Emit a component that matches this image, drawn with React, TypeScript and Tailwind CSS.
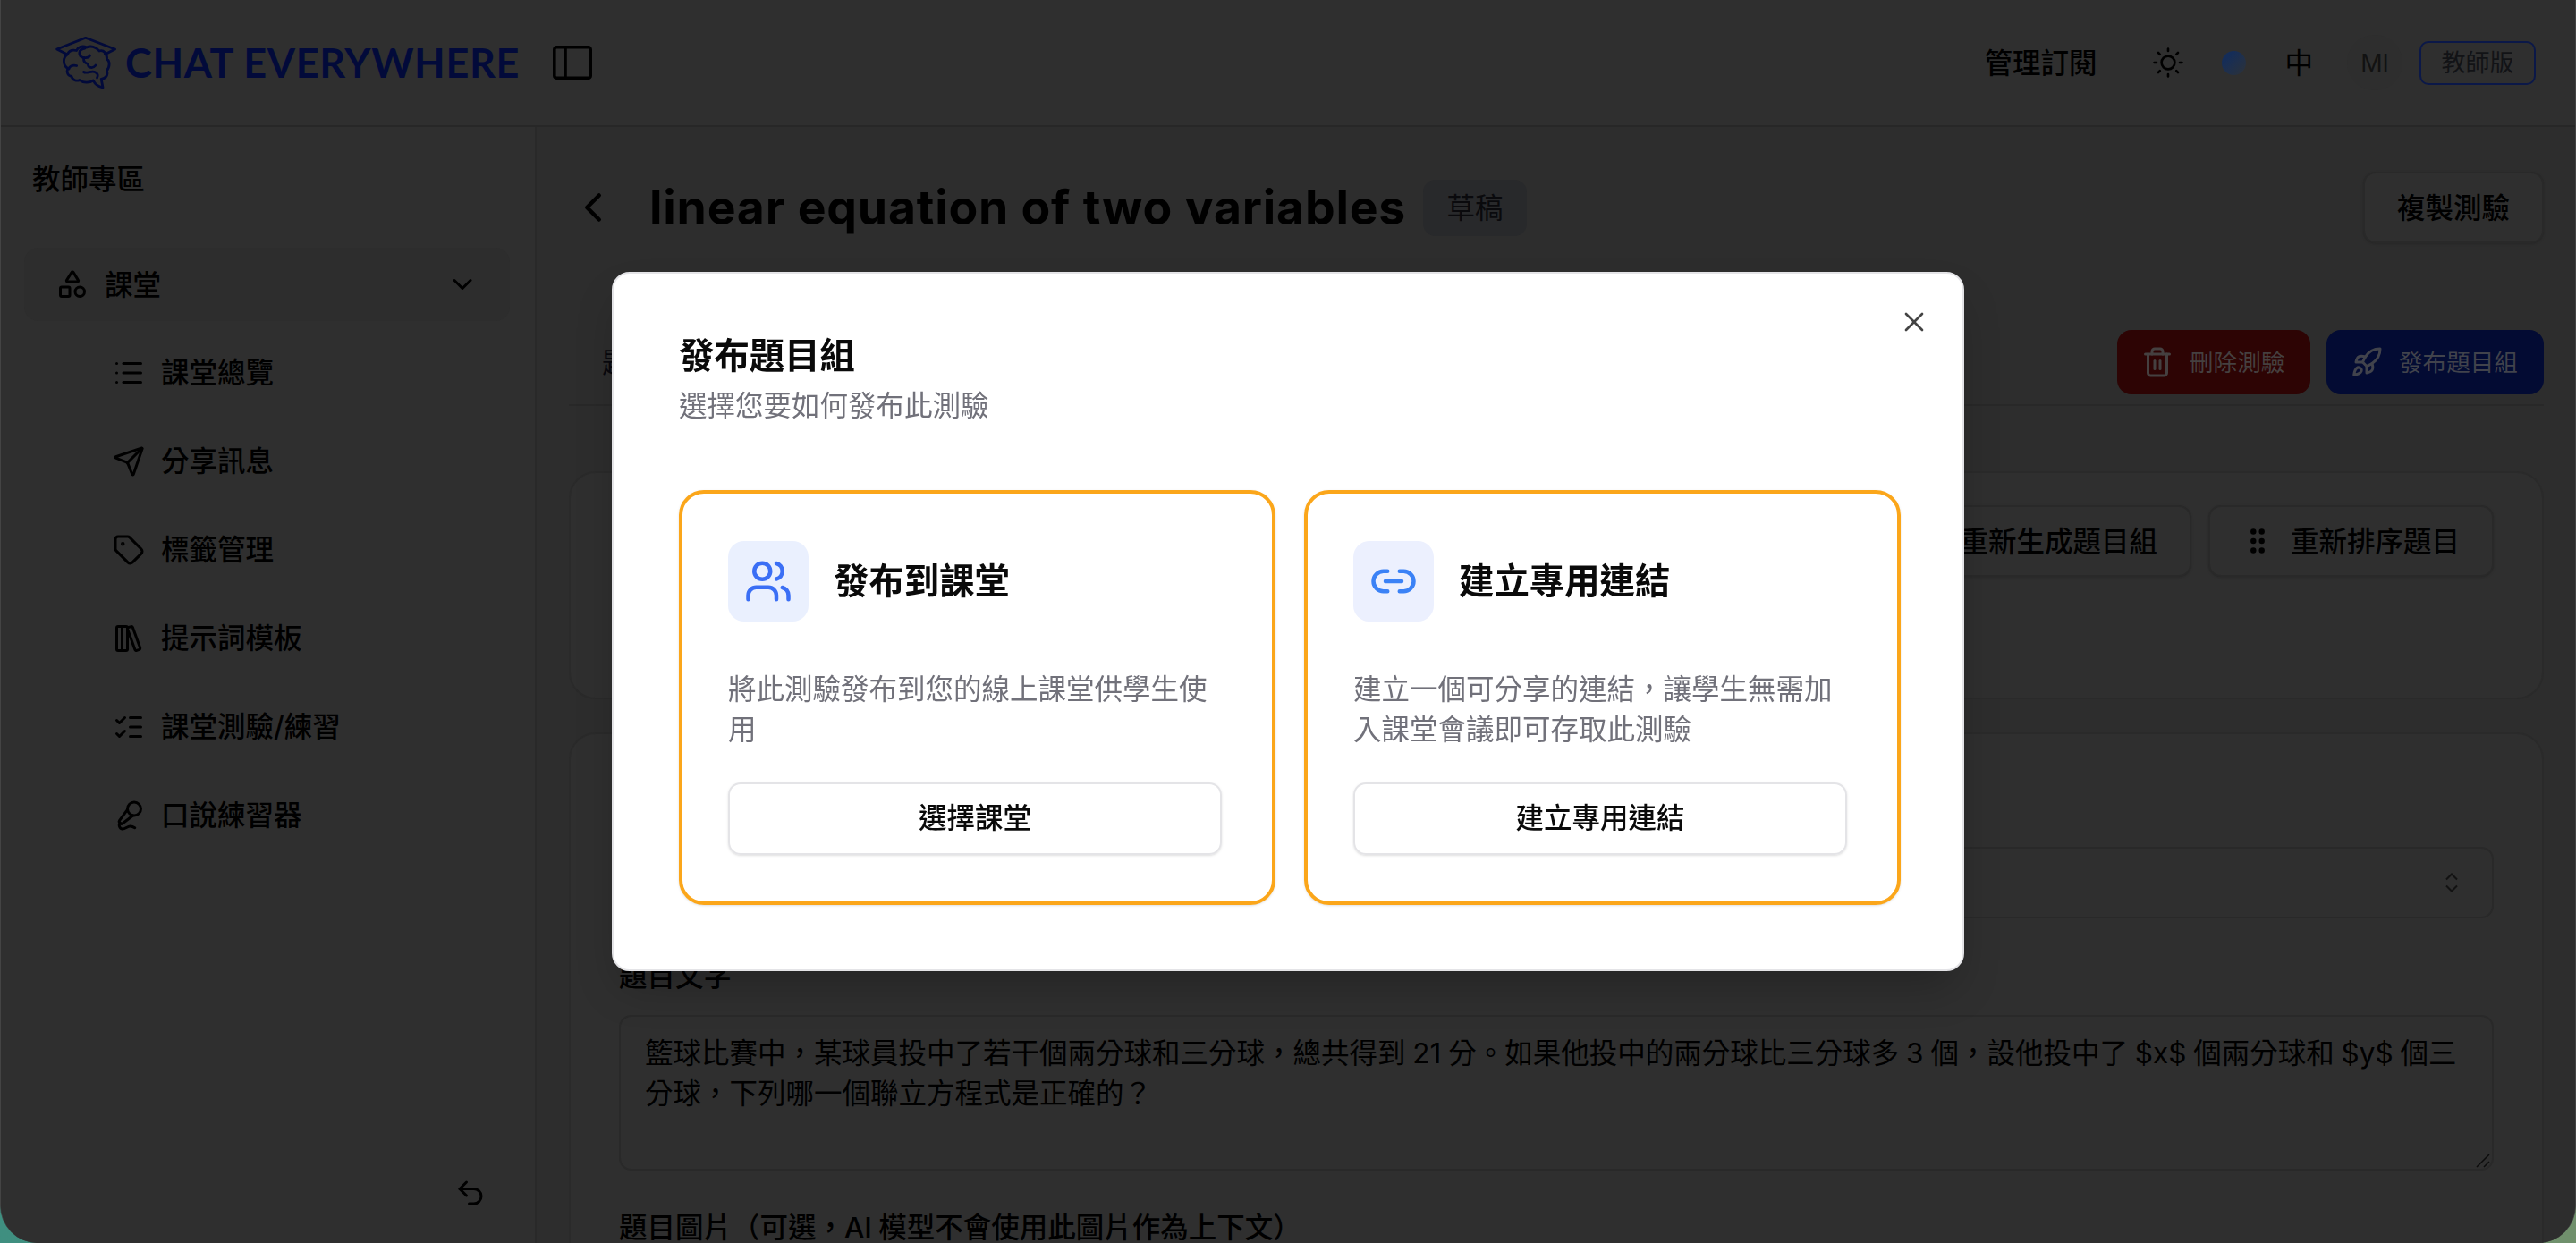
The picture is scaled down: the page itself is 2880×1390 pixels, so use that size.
import { FC, ReactNode } from 'react';
import {
    ChevronDown,
    ChevronLeft,
    LibraryBig,
    Link2,
    List,
    ListChecks,
    LucideIcon,
    MicVocal,
    Rocket,
    Send,
    Shapes,
    Tag,
    Trash2,
    Undo2,
    Users,
    X,
} from 'lucide-react';

const navItems: { label: string; icon: LucideIcon }[] = [
    { label: '課堂總覽', icon: List },
    { label: '分享訊息', icon: Send },
    { label: '標籤管理', icon: Tag },
    { label: '提示詞模板', icon: LibraryBig },
    { label: '課堂測驗/練習', icon: ListChecks },
    { label: '口說練習器', icon: MicVocal },
];

const Logo: FC = () => (
    <div className="flex items-center text-[#020a3a]">
        <svg width="72" height="60" viewBox="0 0 72 60" fill="none" stroke="currentColor" strokeWidth="2.800" strokeLinecap="round" strokeLinejoin="round">
            <path d="M15 20.700 3.600 15 35.700 2.300 68.600 15 57.500 20.700" />
            <path d="M15.500 20.700C10 24 10 33 15.700 36.500C14 41 16 45 20 45.500C21 50 26 51 29 49.500C33 53 40 53 44.300 50C46 54 51 57 55 58L53.200 48.300C59 48 61 43 59.300 39C63 35 63 28 59.500 26C60 20 56 15.500 51 17C47 12 41 11 37 13C32 10.500 27 12.500 25.500 16.500C21 15.500 17 17 15.500 20.700Z" />
            <path d="M35 14C27 15 27 23 33.600 24.500C38 25 40 23.500 40.500 22" />
            <path d="M33.600 25C33 30 36 31 38.500 31.500C37.500 36 44 37 47 33M17 37C17.500 34 21 32.500 25.700 33.500M33.500 40.500C37 43 42 38.500 46 40.500C49.500 42 50 44.500 48.500 47" />
        </svg>
        <span className="ml-[8px] whitespace-nowrap font-['Lato'] text-[45px] font-bold leading-none tracking-[0.650px]">CHAT EVERYWHERE</span>
    </div>
);

const SunIcon: FC = () => (
    <svg width="36" height="36" viewBox="0 0 36 36" fill="none" stroke="currentColor" strokeWidth="2.600" strokeLinecap="round">
        <circle cx="18" cy="18" r="7.400" />
        <path d="M18 2.500v2.500M18 31v2.500M2.500 18H5M31 18h2.500M7 7l1.800 1.800M27.200 27.200 29 29M7 29l1.800-1.800M27.200 8.800 29 7" />
    </svg>
);

const Header: FC = () => (
    <header className="flex h-[142px] shrink-0 items-center border-b-2 border-[#272727] bg-[#2f2f2f] pl-[59px] pr-[44px]">
        <Logo />
        <svg className="ml-auto" width="44" height="38" viewBox="0 0 44 38" fill="none" stroke="currentColor" strokeWidth="3.600">
            <rect x="1.800" y="1.800" width="40.400" height="34.400" rx="2.500" />
            <path d="M14 2v34" />
        </svg>
        <div className="flex w-[2173px] items-center justify-end">
            <span className="font-medium">管理訂閱</span>
            <div className="ml-[62px]"><SunIcon /></div>
            <div className="ml-[42px] size-[27px] rounded-full bg-linear-to-br from-[#152d58] from-25% to-[#2c3138]" />
            <span className="ml-[43px]">中</span>
            <div className="ml-[38px] flex size-[62px] items-center justify-center rounded-full bg-[#2e2e2e] text-[27px] text-[#121212]">MI</div>
            <div className="ml-[19px] flex h-[49px] w-[130px] items-center justify-center rounded-[10px] border-[2.5px] border-[#0b1848] text-[27px] text-[#121316]">教師版</div>
        </div>
    </header>
);

const Sidebar: FC = () => (
    <aside className="flex w-[599px] shrink-0 flex-col border-r-2 border-[#292929] bg-[#2f2f2f] pl-[26px] pr-[28px]">
        <div className="mt-[36px] pl-[9px] font-medium">教師專區</div>
        <div className="mt-[54px] flex h-[82px] items-center rounded-[16px] bg-[#2d2d2d] pl-[36px] pr-[35px]">
            <Shapes size={36} />
            <span className="ml-[18px] font-medium">課堂</span>
            <ChevronDown size={36} className="ml-auto" />
        </div>
        <nav className="mt-[8px] flex flex-col">
            {navItems.map(({ label, icon: Icon }) => (
                <div key={label} className="flex h-[99px] items-center pl-[99px]">
                    <Icon size={36} />
                    <span className="ml-[18px] font-medium">{label}</span>
                </div>
            ))}
        </nav>
        <Undo2 size={36} className="mb-[38px] ml-auto mr-[26px] mt-auto" />
    </aside>
);

const OutlineButton: FC<{ children: ReactNode }> = ({ children }) => (
    <div className="flex h-[80px] items-center whitespace-nowrap rounded-[14px] border-2 border-[#292929] bg-[#2f2f2f] px-[36px] font-medium shadow-sm">
        {children}
    </div>
);

const QuizPage: FC = () => (
    <main className="flex min-w-0 flex-1 flex-col bg-[#2d2d2d] pl-[36px] pr-[35px] pt-[50px]">
        <div className="flex h-[80px] shrink-0 items-center">
            <ChevronLeft size={54} />
            <h1 className="ml-[36px] whitespace-nowrap text-[53.500px] font-bold leading-none tracking-[0.780px]">linear equation of two variables</h1>
            <div className="ml-[19px] flex h-[63px] w-[116px] items-center justify-center rounded-[14px] bg-[#28292b] text-[#0a0a0d]">草稿</div>
            <div className="ml-auto">
                <OutlineButton>複製測驗</OutlineButton>
            </div>
        </div>

        <div className="flex h-[182px] shrink-0 items-end border-b-2 border-[#282828] pb-[11px]">
            <div className="flex h-[72px] items-center pl-[37px] text-[#08080e]">題目</div>
            <div className="ml-auto flex gap-[18px] text-[26.600px] text-[#454040]">
                <div className="flex h-[72px] w-[216px] items-center rounded-[16px] bg-[#2d0404] pl-[27px]">
                    <Trash2 size={36} />
                    <span className="ml-[18px]">刪除測驗</span>
                </div>
                <div className="flex h-[72px] w-[243px] items-center rounded-[16px] bg-[#030b33] pl-[27px] text-[#41434c]">
                    <Rocket size={36} />
                    <span className="ml-[18px]">發布題目組</span>
                </div>
            </div>
        </div>

        <section className="mt-[73px] flex h-[255px] shrink-0 items-start justify-end gap-[19px] rounded-[30px] border-2 border-[#2a2a2a] bg-[#2f2f2f] pr-[54px] pt-[36px]">
            <OutlineButton>重新生成題目組</OutlineButton>
            <OutlineButton>
                <svg className="ml-[9px] mr-[29px]" width="16" height="28" viewBox="0 0 16 28" fill="currentColor">
                    <circle cx="3.300" cy="3.500" r="3.200" />
                    <circle cx="12.700" cy="3.500" r="3.200" />
                    <circle cx="3.300" cy="14" r="3.200" />
                    <circle cx="12.700" cy="14" r="3.200" />
                    <circle cx="3.300" cy="24.500" r="3.200" />
                    <circle cx="12.700" cy="24.500" r="3.200" />
                </svg>
                重新排序題目
            </OutlineButton>
        </section>

        <section className="mt-[37px] flex h-[700px] shrink-0 flex-col rounded-[30px] border-2 border-[#2a2a2a] bg-[#2f2f2f] px-[54px] pt-[126px]">
            <div className="flex h-[80px] shrink-0 items-center justify-end rounded-[14px] border-2 border-[#292929] pr-[38px]">
                <svg width="14" height="22" viewBox="0 0 14 22" fill="none" stroke="#121212" strokeWidth="2">
                    <path d="m1 7.500 6-6 6 6M1 14.500l6 6 6-6" />
                </svg>
            </div>
            <div className="mt-[42px] font-medium">題目文字</div>
            <div className="mt-[21px] flex h-[174px] shrink-0 rounded-[14px] border-2 border-[#292929] pl-[27px] pt-[18px]">
                <p className="w-[2035px] [word-spacing:-1px]">
                    籃球比賽中，某球員投中了若干個兩分球和三分球，總共得到 21 分。如果他投中的兩分球比三分球多 3 個，設他投中了 $x$ 個兩分球和 $y$ 個三分球，下列哪一個聯立方程式是正確的？
                </p>
                <svg className="ml-auto mt-auto" width="18" height="18" viewBox="0 0 18 18" stroke="#0c0c0c" strokeWidth="1.500">
                    <path d="M1 16 15 2M9 16l6-6" />
                </svg>
            </div>
            <div className="mt-[48px] whitespace-nowrap font-medium leading-[32px] [word-spacing:-1px]">題目圖片（可選，AI 模型不會使用此圖片作為上下文）</div>
        </section>
    </main>
);

interface OptionProps {
    icon: LucideIcon;
    iconClass: string;
    title: string;
    description: string;
    action: string;
}

const PublishOption: FC<OptionProps> = ({ icon: Icon, iconClass, title, description, action }) => (
    <div className="flex h-[464px] w-[667px] flex-col rounded-[28px] border-4 border-[#fba61a] px-[51px] pt-[53px] shadow-sm">
        <div className="flex items-center">
            <div className={`flex size-[90px] items-center justify-center rounded-[18px] ${iconClass}`}>
                <Icon size={54} />
            </div>
            <h3 className="ml-[28px] pt-[1px] text-[39.400px] font-semibold leading-none">{title}</h3>
        </div>
        <p className="mt-[53px] h-[90px] w-[552px] text-[#71717a]">{description}</p>
        <button className="mt-[37px] h-[81px] w-[552px] rounded-[14px] border-2 border-[#e4e4e7] pb-[2px] font-medium shadow-sm">{action}</button>
    </div>
);

const PublishDialog: FC = () => (
    <div className="fixed inset-0 flex items-center justify-center">
        <div className="relative flex h-[782px] w-[1512px] flex-col rounded-[20px] border-2 border-[#e4e4e7] bg-white pl-[73px] pt-[66px] text-[#0a0a0a] shadow-2xl">
            <X size={36} strokeWidth={1.8} className="absolute right-[36px] top-[36px] text-[#444]" />
            <h2 className="text-[39.400px] font-semibold leading-[52px]">發布題目組</h2>
            <p className="mt-[7px] text-[#71717a]">選擇您要如何發布此測驗</p>
            <div className="mt-[72px] flex gap-[32px]">
                <PublishOption
                    icon={Users}
                    iconClass="bg-[#eaf0fe] text-[#3b6ff5]"
                    title="發布到課堂"
                    description="將此測驗發布到您的線上課堂供學生使用"
                    action="選擇課堂"
                />
                <PublishOption
                    icon={Link2}
                    iconClass="bg-[#ecf0fe] text-[#3b82f6]"
                    title="建立專用連結"
                    description="建立一個可分享的連結，讓學生無需加入課堂會議即可存取此測驗"
                    action="建立專用連結"
                />
            </div>
        </div>
    </div>
);

export default function App() {
    return (
        <div
            lang="zh-Hant"
            className="h-[1390px] w-[2880px] overflow-hidden bg-linear-to-r from-[#3f8f80] to-[#70906c] font-['Inter','Noto_Sans_CJK_TC',sans-serif] text-[31.500px] leading-[45px] text-black"
        >
            <div className="flex h-[1390px] flex-col overflow-hidden rounded-b-[42px] border-x border-[#444] bg-[#2f2f2f]">
                <Header />
                <div className="flex min-h-0 flex-1 overflow-hidden">
                    <Sidebar />
                    <QuizPage />
                </div>
            </div>
            <PublishDialog />
        </div>
    );
}
